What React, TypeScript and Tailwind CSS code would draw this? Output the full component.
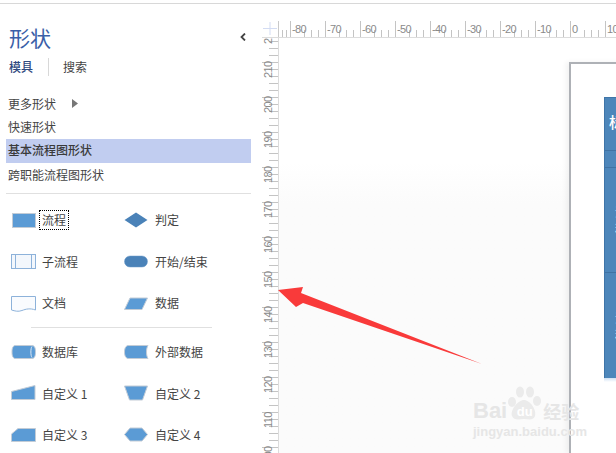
const CJK = "font-['Noto_Sans_CJK_SC',_'Liberation_Sans',_sans-serif]";

function ShapeIcon({ name }: { name: string }) {
  const blue = "#5b9bd5";
  const dark = "#4a82b8";
  const sh = "#c3ccd6";
  const line = "#8db2da";
  const p = { stroke: sh, strokeWidth: 1, fill: blue };
  let el = null;
  switch (name) {
    case "流程":
      el = <rect x="1.5" y="1.5" width="23" height="14" {...p} />;
      break;
    case "判定":
      el = <polygon points="0.5,8 12,0.5 23.5,8 12,15.5" fill={dark} />;
      break;
    case "子流程":
      el = (
        <g fill="#f3f7fc" stroke={line}>
          <rect x="0.5" y="1.5" width="24" height="14" />
          <path d="M4.5 1.5v14M20.5 1.5v14" fill="none" />
        </g>
      );
      break;
    case "开始/结束":
      el = <rect x="0.5" y="3" width="23" height="11" rx="5.5" fill={dark} stroke="#6d9bc8" strokeWidth="0.5" />;
      break;
    case "文档":
      el = <path d="M0.5 1.5H24.5V15C19 13 15 14 11 15.5C7 17 4 16 0.5 15Z" fill="#f9fbfe" stroke={line} />;
      break;
    case "数据":
      el = <polygon points="6,3 23.5,3 18,14.5 0.5,14.5" {...p} />;
      break;
    case "数据库":
      el = (
        <g>
          <path d="M4.500 1.500H21C23.500 1.500 24.500 4 24.500 8S23.500 14.500 21 14.500H4.500C2 14.500 1 12 1 8S2 1.500 4.500 1.500Z" {...p} />
          <path d="M21 2.500C19.500 4 19.500 12 21 13.500" fill="none" stroke="#dfe9f4" />
        </g>
      );
      break;
    case "外部数据":
      el = <path d="M4.500 1.500H24C22 4 22 12 24 14.500H4.500C2 14.500 0.500 12 0.500 8S2 1.500 4.500 1.500Z" {...p} />;
      break;
    case "自定义 1":
      el = <polygon points="0.500,6.500 24,0.500 24,14.500 0.500,14.500" {...p} />;
      break;
    case "自定义 2":
      el = <polygon points="0.500,1 23.500,1 18.500,15 5.500,15" {...p} />;
      break;
    case "自定义 3":
      el = <polygon points="7,1.500 24.500,1.500 24.500,14.500 0.500,14.500 0.500,7" {...p} />;
      break;
    default:
      el = <polygon points="0.500,7.500 6,1 18,1 23.500,7.500 18,14 6,14" {...p} />;
  }
  return (
    <svg width="25" height="17" viewBox="0 0 25 17" className="shrink-0">
      {el}
    </svg>
  );
}

function ShapeItem({ name, focus }: { name: string; focus?: boolean }) {
  return (
    <div className="flex items-center gap-[6px] h-[20px]">
      <ShapeIcon name={name} />
      <span
        className={
          focus
            ? "text-[12px] leading-[18px] text-[#444] px-[2px] -mx-[2px] outline-1 outline-dotted outline-black whitespace-nowrap"
            : "text-[12px] leading-[18px] text-[#444] whitespace-nowrap"
        }
      >
        {name}
      </span>
    </div>
  );
}

function ShapeGrid({ names }: { names: string[] }) {
  return (
    <div className="grid grid-cols-[113px_1fr] pl-[11px] gap-y-[21.500px]">
      {names.map((n) => (
        <ShapeItem key={n} name={n} focus={n === "流程"} />
      ))}
    </div>
  );
}

function Sidebar() {
  return (
    <aside className="w-[262px] shrink-0 flex flex-col">
      <div className="flex items-center justify-between pl-[9px] pr-[16px] pt-[14px] h-[52px]">
        <h1 className="text-[21px] leading-[28px] text-[#3a5fa8] font-normal">形状</h1>
        <svg width="6" height="8" viewBox="0 0 6 8">
          <path d="M5 0.500L1.500 4L5 7.500" fill="none" stroke="#444" strokeWidth="1.800" />
        </svg>
      </div>
      <div className="flex items-center pl-[9px] h-[18px] mt-[2px] text-[12px]">
        <span className="text-[#2f4a80] font-medium">模具</span>
        <span className="w-px h-[18px] bg-[#d8d8d8] ml-[15px] mr-[14px]" />
        <span className="text-[#444]">搜索</span>
      </div>
      <nav className="mt-[16px] ml-[6px] w-[245px] flex flex-col text-[12px] text-[#444]">
        <div className="h-[23px] pl-[2px] flex items-center">
          更多形状
          <svg width="6" height="9" viewBox="0 0 6 9" className="ml-[16px] mt-[-1px]">
            <polygon points="0,0 6,4.500 0,9" fill="#777" />
          </svg>
        </div>
        <div className="h-[24px] pl-[2px] flex items-center">快速形状</div>
        <div className="h-[24px] pl-[2px] pb-[2px] flex items-center bg-[#c1cdf0] font-medium text-[#3a3a3a]">基本流程图形状</div>
        <div className="h-[23px] pl-[2px] flex items-center">跨职能流程图形状</div>
      </nav>
      <div className="mt-[7px] ml-[6px] w-[245px] h-px bg-[#e0e0e0]" />
      <div className="mt-[16px]">
        <ShapeGrid names={["流程", "判定", "子流程", "开始/结束", "文档", "数据"]} />
      </div>
      <div className="mt-[14px] ml-[31px] w-[181px] h-px bg-[#e0e0e0]" />
      <div className="mt-[14px]">
        <ShapeGrid names={["数据库", "外部数据", "自定义 1", "自定义 2", "自定义 3", "自定义 4"]} />
      </div>
    </aside>
  );
}

function TopRuler() {
  const majors = [-80, -70, -60, -50, -40, -30, -20, -10, 0, 10];
  const ticks: number[] = [282, 286];
  for (let x = 290; x < 616; x += 7) ticks.push(x);
  return (
    <svg width="354" height="34" viewBox="262 4 354 34" className="block shrink-0">
      <path d="M270 22V35M263 28.500H277" stroke="#d3dcf3" fill="none" />
      <path d="M278.500 21V37" stroke="#c9c9c9" />
      {ticks.map((x) => {
        const major = (x - 570) % 35 === 0;
        const hidden = !major && ((x - 570) % 35 === -28 || (x - 570) % 35 === 7);
        if (hidden) return null;
        return (
          <path key={x} d={major ? `M${x + 0.5} 21V37` : `M${x + 0.5} 30V37`} stroke="#c4c4c4" />
        );
      })}
      {majors.map((v, i) => (
        <text
          key={v}
          x={292 + i * 35}
          y="33"
          fontSize="11"
          letterSpacing="-0.6"
          fill="#8a8a8a"
          fontFamily="Liberation Sans, sans-serif"
        >
          {v}
        </text>
      ))}
      <rect x="262" y="37" width="354" height="1" fill="#dcdcdc" />
    </svg>
  );
}

function LeftRuler() {
  const labels: [number, string][] = [
    [27, "2"],
    [62, "210"],
    [97, "200"],
    [132, "190"],
    [167, "180"],
    [202, "170"],
    [237, "160"],
    [272, "150"],
    [307, "140"],
    [342, "130"],
    [377, "120"],
    [412, "110"],
    [447, "100"],
  ];
  const ticks: number[] = [];
  for (let y = 41; y < 453; y += 7) ticks.push(y);
  return (
    <svg width="17" height="415" viewBox="262 38 17 415" className="block shrink-0">
      {ticks.map((y) => {
        const major = (y - 62) % 35 === 0;
        return <path key={y} d={major ? `M262 ${y + 0.5}H278` : `M269 ${y + 0.5}H278`} stroke="#c4c4c4" />;
      })}
      {labels.map(([y, t]) => (
        <text
          key={y}
          transform={`translate(272 ${y === 27 ? 44 : y + 16}) rotate(-90)`}
          fontSize="11"
          letterSpacing="-0.6"
          fill="#8a8a8a"
          fontFamily="Liberation Sans, sans-serif"
        >
          {t}
        </text>
      ))}
      <rect x="278" y="38" width="1" height="415" fill="#dcdcdc" />
    </svg>
  );
}

function Table() {
  return (
    <div className="w-full flex flex-col">
      <div className="h-[281px] bg-[#4d86ba] border-t border-l border-[#3f75a8] flex flex-col text-white">
        <div className="h-[53px] border-b border-[#3f72a3] pl-[4px] pb-[4px] flex items-center text-[15px] font-medium whitespace-nowrap">
          标题
        </div>
        <div className="h-[17px] border-b border-[#3f72a3]" />
        <div className="h-[105px] border-b border-[#3f72a3] pl-[10px] flex flex-col justify-center text-[12px] leading-[17px]">
          <span>流</span>
          <span>程</span>
        </div>
        <div className="flex-1 pl-[10px] flex flex-col justify-center text-[12px] leading-[17px]">
          <span>流</span>
          <span>程</span>
        </div>
      </div>
      <div className="h-[4px] bg-gradient-to-b from-[#cfe0f2] to-white" />
      <div className="flex-1 border-l border-dashed border-[#cfcfcf]" />
    </div>
  );
}

function Arrow() {
  return (
    <svg width="616" height="453" viewBox="0 0 616 453" className="absolute left-0 top-0 pointer-events-none">
      <polygon points="278,290 303,287 301,293 482,364 303,303 296,307" fill="#f93a3a" />
    </svg>
  );
}

function Watermark() {
  return (
    <div className="absolute left-[473px] top-[386px] w-[112px] h-[54px] pointer-events-none select-none">
      <div className="flex items-end h-[35px]">
        <span className="text-[22px] leading-[20px] font-bold text-[#e6e6e6] font-['Liberation_Sans',_sans-serif]">Bai</span>
        <span className="relative w-[35px] h-[35px] flex items-end justify-center">
          <svg width="35" height="35" viewBox="0 0 35 35" className="absolute left-0 top-0">
            <g fill="#ebebeb">
              <ellipse cx="5" cy="16" rx="4" ry="5" />
              <ellipse cx="13" cy="6" rx="4" ry="5.500" />
              <ellipse cx="23" cy="6" rx="4" ry="5.500" />
              <ellipse cx="30" cy="15" rx="4" ry="5" />
              <path d="M17 14C23 14 30 24 28 30C26 35 21 33 17 33C13 33 7 35 5 30C3 24 11 14 17 14Z" />
            </g>
          </svg>
          <span className="relative text-[13px] leading-[18px] font-bold text-white font-['Liberation_Sans',_sans-serif]">du</span>
        </span>
        <span className="text-[18px] leading-[20px] font-bold text-[#e6e6e6] ml-[1px] whitespace-nowrap">经验</span>
      </div>
      <div className="mt-[3px] text-[13px] leading-[15px] font-bold text-[#e6e6e6] font-['Liberation_Sans',_sans-serif] whitespace-nowrap">
        jingyan.baidu.com
      </div>
    </div>
  );
}

export default function App() {
  return (
    <div className={`relative w-[616px] h-[453px] overflow-hidden bg-white flex flex-col ${CJK}`}>
      <div className="h-[3px] shrink-0" />
      <div className="h-px bg-[#d8d8d8] shrink-0" />
      <div className="flex flex-1 min-h-0">
        <Sidebar />
        <div className="flex flex-col w-[354px]">
          <TopRuler />
          <div className="flex flex-1 min-h-0">
            <LeftRuler />
            <div className="flex-1 bg-gradient-to-b from-white from-[30%] to-[#fbfbfb] to-[40%] pl-[290px] pt-[24px] overflow-hidden">
              <div className="h-full w-[60px] bg-white border-l-2 border-t-2 border-[#aeb1b6] shadow-[-3px_0_5px_rgba(0,0,0,0.05)] pl-[33px] pt-[33px] flex flex-col overflow-hidden">
                <Table />
              </div>
            </div>
          </div>
        </div>
      </div>
      <Arrow />
      <Watermark />
    </div>
  );
}
